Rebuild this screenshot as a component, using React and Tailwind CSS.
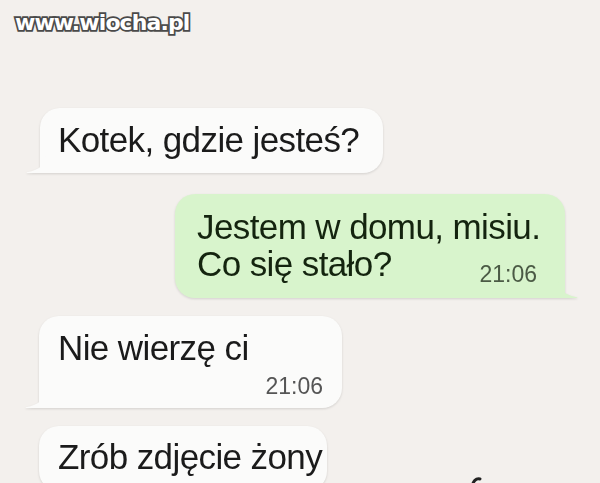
import React from 'react'

function Tail({ side, color }) {
  if (side === 'left') {
    return (
      <svg
        className="absolute bottom-0 left-[-14px]"
        width="20"
        height="18"
        viewBox="0 0 20 18"
      >
        <path d="M20 0 C19.5 9 14 15 1 17.2 Q0 17.6 1 18 L20 18 Z" fill={color} />
      </svg>
    )
  }
  return (
    <svg
      className="absolute bottom-0 right-[-13px]"
      width="20"
      height="18"
      viewBox="0 0 20 18"
    >
      <path d="M0 0 C0.5 9 6 15 19 17.2 Q20 17.6 19 18 L0 18 Z" fill={color} />
    </svg>
  )
}

function Bubble({ side = 'left', tail = true, className = '', children }) {
  const color = side === 'left' ? '#fbfbfa' : '#d8f4cc'
  return (
    <div className={`relative drop-shadow-[0_1px_1px_rgba(0,0,0,0.13)] ${className}`}>
      <div
        className={`rounded-[20px] ${
          side === 'left'
            ? 'bg-[#fbfbfa] text-[#1b1b1b] rounded-bl-[4px]'
            : 'bg-[#d8f4cc] text-[#14240f] rounded-br-[4px]'
        } ${tail ? '' : 'rounded-bl-[20px]'}`}
      >
        {children}
      </div>
      {tail ? <Tail side={side} color={color} /> : null}
    </div>
  )
}

export default function App() {
  return (
    <div className="h-[483px] w-[600px] overflow-hidden bg-[#f3f0ed] font-['Liberation_Sans',Arial,sans-serif]">
      <div className="pl-[15px] pt-[10px]">
        <span className="font-['DejaVu_Sans',sans-serif] text-[22px] font-bold leading-[26px] tracking-[-0.9px] text-white [-webkit-text-stroke:3.5px_#4a4a4a] [paint-order:stroke_fill]">
          www.wiocha.pl
        </span>
      </div>

      <div className="mt-[71px] flex flex-col whitespace-nowrap text-[35px] tracking-[-0.6px]">
        <div className="flex">
          <Bubble side="left" className="ml-[40px] w-[343px]">
            <div className="px-[18px] pb-[13px] pt-[12px] leading-[40px]">Kotek, gdzie jesteś?</div>
          </Bubble>
        </div>

        <div className="mt-[21px] flex">
          <Bubble side="right" className="ml-[175px] w-[390px]">
            <div className="pb-[16px] pl-[22px] pr-[28px] pt-[14px] leading-[37px]">
              <div>Jestem w domu, misiu.</div>
              <div className="flex items-end justify-between">
                <span>Co się stało?</span>
                <span className="mb-[-4px] text-[23px] leading-[23px] tracking-normal text-[#4b5a45]">21:06</span>
              </div>
            </div>
          </Bubble>
        </div>

        <div className="mt-[18px] flex">
          <Bubble side="left" className="ml-[39px] w-[303px]">
            <div className="pb-[10px] pl-[19px] pr-[19px] pt-[12px]">
              <div className="leading-[40px]">Nie wierzę ci</div>
              <div className="mt-[7px] flex justify-end">
                <span className="text-[23px] leading-[23px] tracking-normal text-[#555555]">21:06</span>
              </div>
            </div>
          </Bubble>
        </div>

        <div className="mt-[18px] flex items-start">
          <Bubble side="left" tail={false} className="ml-[39px] w-[288px]">
            <div className="pb-[14px] pl-[19px] pr-[16px] pt-[11px] leading-[40px]">Zrób zdjęcie żony</div>
          </Bubble>
          <svg className="ml-[143px] mt-[51px]" width="12" height="10" viewBox="0 0 12 10">
            <path d="M2 10 C3 4 6 1 10 2" stroke="#222" strokeWidth="3" fill="none" strokeLinecap="round" />
          </svg>
        </div>
      </div>
    </div>
  )
}
